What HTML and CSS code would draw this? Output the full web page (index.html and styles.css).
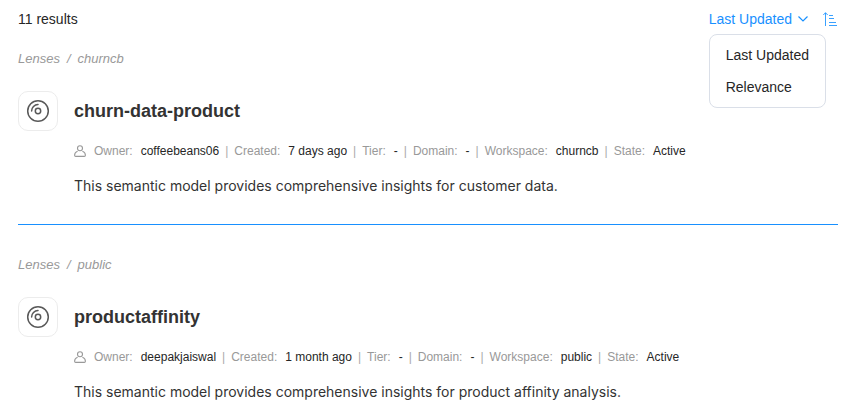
FILE: index.html
```html
<!DOCTYPE html>
<html lang="en">
<head>
<meta charset="utf-8">
<meta name="viewport" content="width=device-width, initial-scale=1">
<title>Search results</title>
<link rel="stylesheet" href="styles.css">
</head>
<body>
<svg class="defs" aria-hidden="true">
  <symbol id="disc" viewBox="0 0 24 24">
    <g fill="none" stroke="#595959" stroke-width="1.5" stroke-linecap="round">
      <circle cx="12" cy="12" r="10.3"/>
      <circle cx="12" cy="12" r="2.7"/>
      <path d="M5.6 12A6.4 6.4 0 0 1 12 5.6"/>
    </g>
  </symbol>
  <symbol id="person" viewBox="0 0 12 12">
    <g fill="none" stroke="#999" stroke-width="1.1">
      <circle cx="6" cy="3.2" r="2.5"/>
      <path d="M3.6 6.3C1.6 6.9.6 8.4.6 10.300c0 .7.4 1.1 1.1 1.1h8.600c.7 0 1.1-.4 1.1-1.1 0-1.900-1-3.400-3-4"/>
    </g>
  </symbol>
</svg>
<main class="results">
  <header class="toolbar">
    <span class="count">11 results</span>
    <div class="sort">
      <div class="dropdown">
        <button class="trigger" type="button" aria-haspopup="menu" aria-expanded="true">Last Updated
          <svg class="chevron" viewBox="0 0 10 6" aria-hidden="true"><path d="M.5.5 5 5 9.500.5" fill="none" stroke="currentColor" stroke-width="1.2"/></svg>
        </button>
        <div class="menu" role="menu">
          <button class="option" type="button" role="menuitem">Last Updated</button>
          <button class="option" type="button" role="menuitem">Relevance</button>
        </div>
      </div>
      <button class="direction" type="button" aria-label="Sort ascending">
        <svg viewBox="0 0 15 14" aria-hidden="true"><path d="M2.500 14V.8M.3 3 2.500.7 4.700 3M6 3.500H10M6 6.500H11M6 10.500H13M6 13.500H14" fill="none" stroke="currentColor" stroke-opacity=".85"/></svg>
      </button>
    </div>
  </header>

  <article class="result">
    <nav class="crumbs" aria-label="Location"><a href="#">Lenses</a><span>/</span><a href="#">churncb</a></nav>
    <div class="card">
      <div class="badge"><svg viewBox="0 0 24 24" aria-hidden="true"><use href="#disc"/></svg></div>
      <div class="body">
        <h2><a href="#">churn-data-product</a></h2>
        <dl class="meta">
          <div><svg class="person" aria-hidden="true"><use href="#person"/></svg><dt>Owner:</dt><dd>coffeebeans06</dd></div>
          <div><dt>Created:</dt><dd>7 days ago</dd></div>
          <div><dt>Tier:</dt><dd>-</dd></div>
          <div><dt>Domain:</dt><dd>-</dd></div>
          <div><dt>Workspace:</dt><dd>churncb</dd></div>
          <div><dt>State:</dt><dd>Active</dd></div>
        </dl>
        <p>This semantic model provides comprehensive insights for customer data.</p>
      </div>
    </div>
  </article>

  <article class="result">
    <nav class="crumbs" aria-label="Location"><a href="#">Lenses</a><span>/</span><a href="#">public</a></nav>
    <div class="card">
      <div class="badge"><svg viewBox="0 0 24 24" aria-hidden="true"><use href="#disc"/></svg></div>
      <div class="body">
        <h2><a href="#">productaffinity</a></h2>
        <dl class="meta">
          <div><svg class="person" aria-hidden="true"><use href="#person"/></svg><dt>Owner:</dt><dd>deepakjaiswal</dd></div>
          <div><dt>Created:</dt><dd>1 month ago</dd></div>
          <div><dt>Tier:</dt><dd>-</dd></div>
          <div><dt>Domain:</dt><dd>-</dd></div>
          <div><dt>Workspace:</dt><dd>public</dd></div>
          <div><dt>State:</dt><dd>Active</dd></div>
        </dl>
        <p>This semantic model provides comprehensive insights for product affinity analysis.</p>
      </div>
    </div>
  </article>
</main>
</body>
</html>
```
FILE: styles.css
```css
* { box-sizing: border-box; }
body {
  margin: 0;
  background: #fff;
  color: #262626;
  font: 14px/22px "Liberation Sans", Arial, sans-serif;
}
a { color: inherit; text-decoration: none; }
button {
  padding: 0;
  border: 0;
  background: none;
  color: inherit;
  font: inherit;
  cursor: pointer;
}
svg { display: block; flex: none; }
.defs { position: absolute; width: 0; height: 0; }
.results { padding: 8px 9px 0 18px; }
.toolbar { display: flex; justify-content: space-between; align-items: center; }
.sort { display: flex; align-items: center; gap: 15px; color: #1890ff; }
.dropdown { position: relative; }
.trigger { display: flex; align-items: center; gap: 6px; }
.chevron { width: 10px; height: 6px; }
.direction svg { width: 15px; height: 14px; }
.menu {
  position: absolute;
  top: 26px;
  left: 0;
  padding: 4px;
  border: 1px solid #dadfe8;
  border-radius: 8px;
  background: #fff;
  color: #262626;
}
.option {
  display: block;
  width: 100%;
  padding: 5px 12px;
  text-align: left;
  white-space: nowrap;
}
.result { padding: 19px 0 27px; }
.result + .result { border-top: 1px solid #1890ff; padding-top: 30px; }
.crumbs {
  display: flex;
  gap: 7px;
  color: #999;
  font-size: 13px;
  line-height: 20px;
  font-style: italic;
}
.card { display: flex; gap: 16px; margin-top: 22px; }
.badge {
  display: grid;
  place-items: center;
  flex: none;
  width: 40px;
  height: 40px;
  border: 1px solid #ececec;
  border-radius: 10px;
}
.badge svg { width: 24px; height: 24px; }
.body { min-width: 0; }
h2 { margin: 0; color: #333; font-size: 18px; line-height: 40px; }
.meta {
  display: flex;
  flex-wrap: wrap;
  margin: 10px 0 0;
  font-size: 12px;
  line-height: 20px;
}
.meta div { display: flex; align-items: center; gap: 8px; }
.meta div + div::before { content: "|"; margin: 0 -2px 0 6px; color: #aaa; }
.meta dt { color: #999; }
.meta dd { margin: 0; }
.person { width: 12px; height: 12px; }
.body p {
  margin: 14px 0 0;
  color: #333;
  font-family: Inter, sans-serif;
}
```
